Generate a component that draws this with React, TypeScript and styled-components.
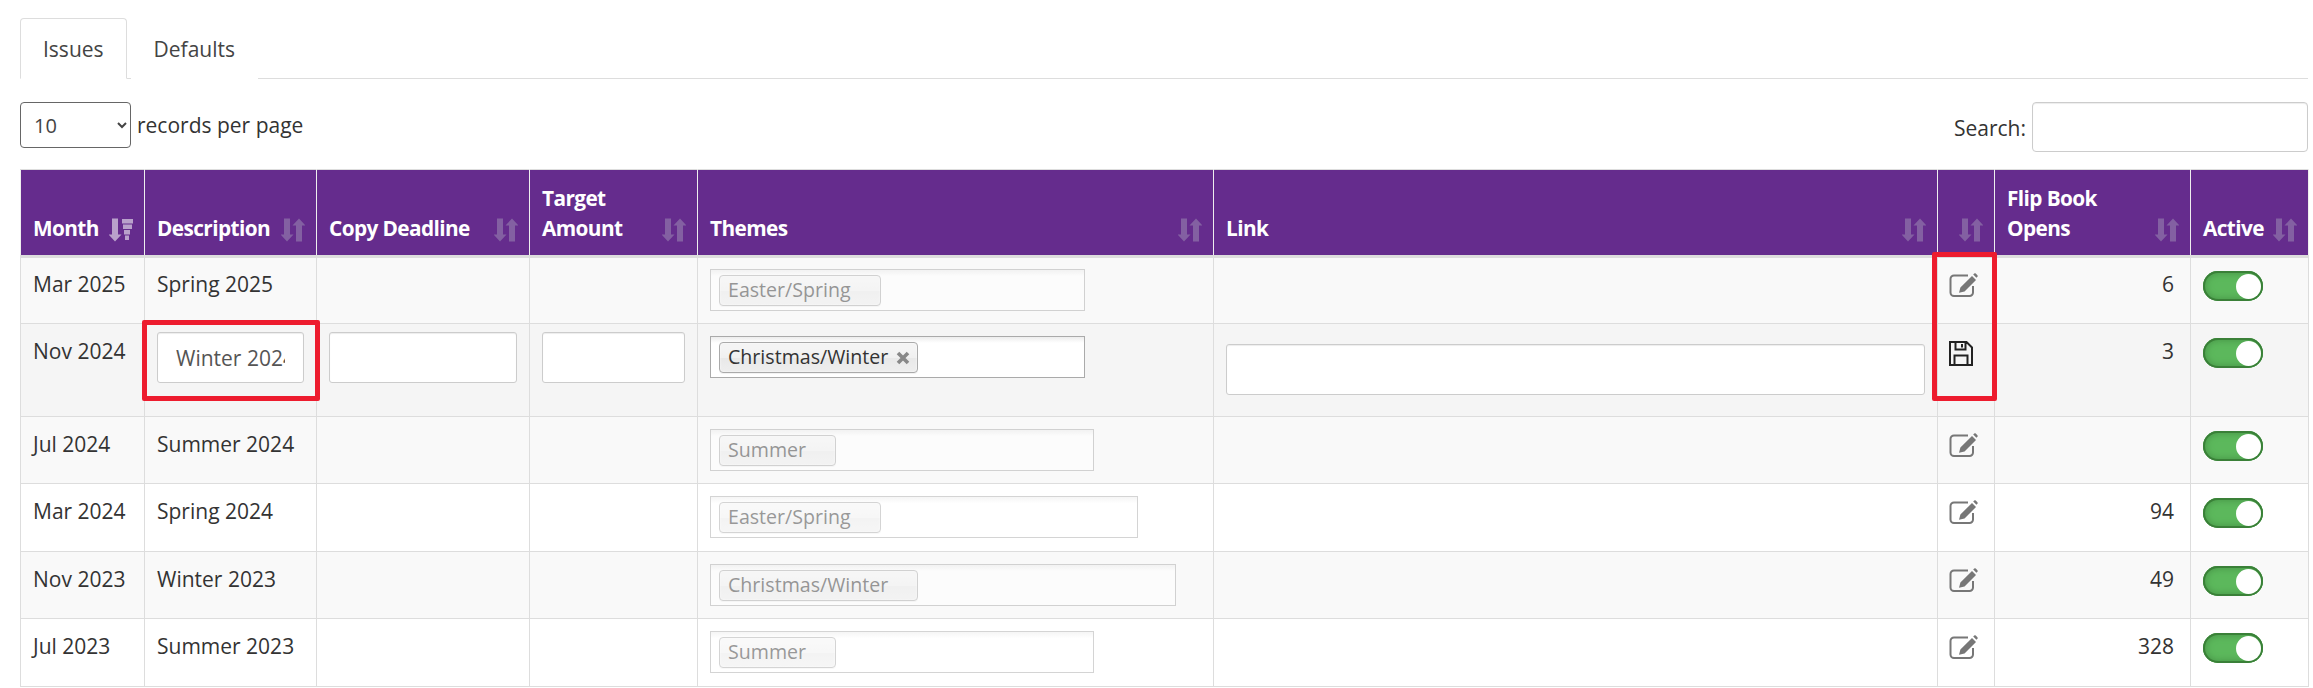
import React from "react";
import styled, { createGlobalStyle } from "styled-components";

const Global = createGlobalStyle`
  html, body { margin: 0; padding: 0; background: #fff; overflow: hidden; }
  body { font-family: "Open Sans", "Liberation Sans", sans-serif; font-size: 21px; color: #333; }
`;

const Page = styled.div`
  position: relative;
  width: 2313px;
  height: 688px;
  box-sizing: border-box;
  padding: 18px 5px 0 20px;
  overflow: hidden;
`;

const TabBar = styled.div`
  display: flex;
  height: 61px;
  box-sizing: border-box;
  border-bottom: 1px solid #ddd;
`;

const Tab = styled.div<{ $active?: boolean }>`
  box-sizing: border-box;
  height: 61px;
  padding: 15px 22px 0;
  line-height: 30px;
  border: 1px solid ${(p) => (p.$active ? "#ddd" : "transparent")};
  border-bottom: 1px solid ${(p) => (p.$active ? "#fff" : "transparent")};
  border-radius: 4px 4px 0 0;
  margin-right: 4px;
  color: #444;
  background: #fff;
`;

const Toolbar = styled.div`
  display: flex;
  justify-content: space-between;
  align-items: flex-start;
  height: 67px;
  padding-top: 23px;
`;

const LengthControl = styled.label`
  display: flex;
  align-items: center;
  gap: 6px;
  height: 46px;
`;

const LengthSelect = styled.select`
  width: 111px;
  height: 46px;
  box-sizing: border-box;
  padding: 0 0 0 9px;
  font: inherit;
  font-size: 20px;
  color: #444;
  background: #fff;
  border: 1px solid #666;
  border-radius: 4px;
`;

const SearchControl = styled.label`
  display: flex;
  align-items: flex-start;
  gap: 6px;
  height: 50px;
  line-height: 52px;
`;

const SearchInput = styled.input`
  width: 276px;
  height: 50px;
  box-sizing: border-box;
  border: 1px solid #ccc;
  border-radius: 4px;
  background: #fff;
  box-shadow: inset 0 1px 1px rgba(0, 0, 0, 0.075);
`;

const Table = styled.table`
  width: 2288px;
  table-layout: fixed;
  border-collapse: collapse;

  tbody tr:first-child td {
    padding-top: 11px;
  }
`;

const Col = styled.col<{ $w: number }>`
  width: ${(p) => p.$w}px;
`;

const HeadRow = styled.tr`
  height: 87px;
`;

const Th = styled.th`
  box-sizing: border-box;
  background: #652c8d;
  color: #fff;
  font-size: 20.8px;
  font-weight: 700;
  text-align: left;
  vertical-align: bottom;
  padding: 0 11px 12px 12px;
  line-height: 30px;
  border: 1px solid #ddd;
  border-bottom: 3px solid #ddd;
  border-left-color: #eee;
  border-right-color: #eee;
  letter-spacing: -0.6px;
`;

const HeadInner = styled.div`
  display: flex;
  justify-content: space-between;
  align-items: flex-end;
`;

const SortSvg = styled.svg<{ $on?: boolean }>`
  flex: none;
  width: 24px;
  height: 24px;
  margin-bottom: 1px;
  color: ${(p) => (p.$on ? "#b9a1cb" : "#8360a2")};
`;

const BodyRow = styled.tr<{ $h: number; $bg: string }>`
  height: ${(p) => p.$h}px;
  background: ${(p) => p.$bg};
`;

const Td = styled.td<{ $right?: boolean }>`
  box-sizing: border-box;
  vertical-align: top;
  padding: 12px ${(p) => (p.$right ? "16px" : "12px")} 0 12px;
  line-height: 30px;
  border: 1px solid #ddd;
  text-align: ${(p) => (p.$right ? "right" : "left")};
`;

const TextInput = styled.input<{ $pad?: number; $top?: number }>`
  display: block;
  width: 100%;
  height: 51px;
  box-sizing: border-box;
  margin-top: ${(p) => p.$top ?? -4}px;
  padding: 0 ${(p) => p.$pad ?? 0}px;
  font: inherit;
  color: #555;
  background: #fff;
  border: 1px solid #ccc;
  border-radius: 3px;
  box-shadow: inset 0 1px 1px rgba(0, 0, 0, 0.075);
`;

const ChoiceBox = styled.div<{ $w: number; $off?: boolean }>`
  box-sizing: border-box;
  width: ${(p) => p.$w}px;
  height: 42px;
  padding: 4px 0 0 8px;
  border: 1px solid #aaa;
  background: linear-gradient(#eee 1%, #fff 15%);
  opacity: ${(p) => (p.$off ? 0.5 : 1)};
`;

const Chip = styled.span`
  position: relative;
  display: inline-block;
  box-sizing: border-box;
  height: 31px;
  line-height: 28px;
  padding: 0 29px 0 8px;
  font-size: 19.6px;
  color: #333;
  border: 1px solid #aaa;
  border-radius: 4px;
  background: linear-gradient(#f4f4f4 20%, #f0f0f0 50%, #e8e8e8 52%, #eee);
  box-shadow: 0 0 2px #fff inset, 0 1px 0 rgba(0, 0, 0, 0.05);
`;

const ChipClose = styled.svg`
  position: absolute;
  right: 7px;
  top: 8px;
  width: 14px;
  height: 14px;
`;

const IconCell = styled.div<{ $top: number }>`
  display: flex;
  margin: ${(p) => p.$top}px 0 0 -1px;
`;

const Toggle = styled.div`
  display: flex;
  justify-content: flex-end;
  align-items: center;
  box-sizing: border-box;
  width: 60px;
  height: 30px;
  margin-top: 2px;
  padding-right: 2px;
  border-radius: 15px;
  background: #5cb85c;
  box-shadow: inset 0 0 0 2px #3a8038, inset 0 0 6px 3px #4a9a4a;
`;

const Knob = styled.span`
  width: 25px;
  height: 25px;
  border-radius: 50%;
  background: #fff;
`;

const Callout = styled.div<{ $x: number; $y: number; $w: number; $h: number }>`
  position: absolute;
  left: ${(p) => p.$x}px;
  top: ${(p) => p.$y}px;
  width: ${(p) => p.$w}px;
  height: ${(p) => p.$h}px;
  box-sizing: border-box;
  border: 5px solid #ed1c2e;
  border-radius: 2px;
  pointer-events: none;
`;

const SortIcon = ({ on }: { on?: boolean }) => (
  <SortSvg $on={on} viewBox="0 0 24 24" fill="currentColor" aria-hidden>
    <path d="M3 0.5h6v16h3.5l-6.5 7-6.5-7H3z" />
    {on ? (
      <path d="M13 1h11v4.4H13zM14 6.5h9v4.4h-9zM15 12h6v4.4h-6zM16 17.500h4v4.4h-4z" />
    ) : (
      <path d="M15 23.500h6v-16h3.500L18 .5l-6.500 7H15z" />
    )}
  </SortSvg>
);

const EditIcon = () => (
  <svg width="29" height="24" viewBox="0 0 29 24" aria-hidden>
    <path
      d="M19 2.500H5a3.500 3.500 0 0 0-3.500 3.500v13.500A3.500 3.500 0 0 0 5 23h15.500a3.500 3.500 0 0 0 3.500-3.500V13"
      fill="none"
      stroke="#777"
      strokeWidth="2"
    />
    <path
      d="M23 3l4 4-11.500 11.500-5.500 1.300 1.400-5.300zM24.200 1.600l1-1a1.200 1.200 0 0 1 1.600 0l1.600 1.600a1.200 1.200 0 0 1 0 1.600l-1 1z"
      fill="#777"
    />
  </svg>
);

const SaveIcon = () => (
  <svg width="24" height="25" viewBox="0 0 24 25" aria-hidden>
    <path
      d="M1 1h16.500L23 6.500V24H1z M6.500 1v7.500h10V1 M13 3v3.500 M5.500 24v-9.500h13V24"
      fill="none"
      stroke="#222"
      strokeWidth="2"
    />
  </svg>
);

const colWidths = [124, 172, 213, 168, 516, 724, 57, 196, 118];

const heads: { label: React.ReactNode; on?: boolean }[] = [
  { label: "Month", on: true },
  { label: "Description" },
  { label: "Copy Deadline" },
  { label: <>Target<br />Amount</> },
  { label: "Themes" },
  { label: "Link" },
  { label: "" },
  { label: <>Flip Book<br />Opens</> },
  { label: "Active" },
];

const rows = [
  { month: "Mar 2025", desc: "Spring 2025", theme: "Easter/Spring", w: 375, opens: "6", h: 67, bg: "#f9f9f9" },
  { month: "Jul 2024", desc: "Summer 2024", theme: "Summer", w: 384, opens: "", h: 67, bg: "#f9f9f9" },
  { month: "Mar 2024", desc: "Spring 2024", theme: "Easter/Spring", w: 428, opens: "94", h: 68, bg: "#fff" },
  { month: "Nov 2023", desc: "Winter 2023", theme: "Christmas/Winter", w: 466, opens: "49", h: 67, bg: "#f9f9f9" },
  { month: "Jul 2023", desc: "Summer 2023", theme: "Summer", w: 384, opens: "328", h: 68, bg: "#fff" },
];

const ActiveCell = () => (
  <Td>
    <Toggle>
      <Knob />
    </Toggle>
  </Td>
);

const ReadRow = ({ r }: { r: (typeof rows)[number] }) => (
  <BodyRow $h={r.h} $bg={r.bg}>
    <Td>{r.month}</Td>
    <Td>{r.desc}</Td>
    <Td />
    <Td />
    <Td>
      <ChoiceBox $w={r.w} $off>
        <Chip>{r.theme}</Chip>
      </ChoiceBox>
    </Td>
    <Td />
    <Td>
      <IconCell $top={4}>
        <EditIcon />
      </IconCell>
    </Td>
    <Td $right>{r.opens}</Td>
    <ActiveCell />
  </BodyRow>
);

export default function App() {
  return (
    <Page>
      <Global />
      <TabBar>
        <Tab $active>Issues</Tab>
        <Tab>Defaults</Tab>
      </TabBar>
      <Toolbar>
        <LengthControl>
          <LengthSelect defaultValue="10">
            <option>10</option>
            <option>25</option>
            <option>50</option>
          </LengthSelect>
          records per page
        </LengthControl>
        <SearchControl>
          Search:
          <SearchInput />
        </SearchControl>
      </Toolbar>
      <Table>
        <colgroup>
          {colWidths.map((w, i) => (
            <Col key={i} $w={w} />
          ))}
        </colgroup>
        <thead>
          <HeadRow>
            {heads.map((h, i) => (
              <Th key={i}>
                <HeadInner>
                  <span>{h.label}</span>
                  <SortIcon on={h.on} />
                </HeadInner>
              </Th>
            ))}
          </HeadRow>
        </thead>
        <tbody>
          <ReadRow r={rows[0]} />
          <BodyRow $h={93} $bg="#f5f5f5">
            <Td>Nov 2024</Td>
            <Td>
              <TextInput defaultValue="Winter 2024" $pad={18} />
            </Td>
            <Td>
              <TextInput />
            </Td>
            <Td>
              <TextInput />
            </Td>
            <Td>
              <ChoiceBox $w={375}>
                <Chip>
                  Christmas/Winter
                  <ChipClose viewBox="0 0 14 14" aria-hidden>
                    <path d="M2 2l10 10M12 2L2 12" stroke="#888" strokeWidth="3.6" />
                  </ChipClose>
                </Chip>
              </ChoiceBox>
            </Td>
            <Td>
              <TextInput $top={8} />
            </Td>
            <Td>
              <IconCell $top={5}>
                <SaveIcon />
              </IconCell>
            </Td>
            <Td $right>3</Td>
            <ActiveCell />
          </BodyRow>
          {rows.slice(1).map((r) => (
            <ReadRow key={r.desc} r={r} />
          ))}
        </tbody>
      </Table>
      <Callout $x={142} $y={320} $w={178} $h={81} />
      <Callout $x={1932} $y={252} $w={65} $h={149} />
    </Page>
  );
}
